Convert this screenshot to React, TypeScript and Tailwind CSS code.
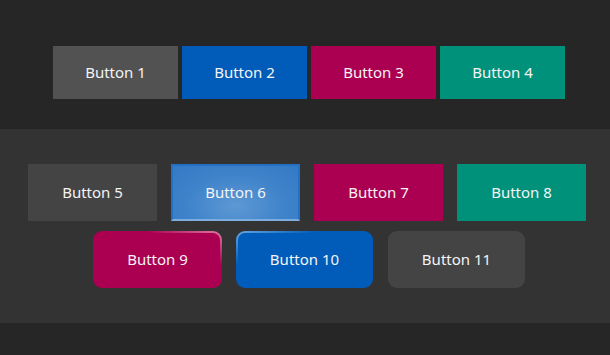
import React from "react";

const font = "font-['Segoe_UI','Noto_Sans','Open_Sans',sans-serif]";

export default function App() {
  const base = `flex items-center justify-center text-[15px] text-[#f4f4f4] ${font}`;
  return (
    <div className="w-[610px] h-[355px] bg-[#262626] overflow-hidden">
      <div className="h-[129px] pl-[53px] pt-[46px] flex gap-[4px]">
        <div className={`${base} w-[125px] h-[53px] bg-[#525252]`}>Button 1</div>
        <div className={`${base} w-[125px] h-[53px] bg-[#005cb8]`}>Button 2</div>
        <div className={`${base} w-[125px] h-[53px] bg-[#ab0051]`}>Button 3</div>
        <div className={`${base} w-[125px] h-[53px] bg-[#00917b]`}>Button 4</div>
      </div>
      <div className="h-[194px] bg-[#333333] pt-[35px] flex flex-col gap-[10px]">
        <div className="flex pl-[28px] gap-[14px]">
          <div className={`${base} w-[129px] h-[57px] bg-[#444444]`}>Button 5</div>
          <div
            className={`${base} w-[129px] h-[57px] border-2 border-[#2470c4] border-b-[#7eaee0] bg-[radial-gradient(ellipse_at_50%_75%,#5e98d4_0%,#3f83ca_55%,#3479c6_100%)]`}
          >
            Button 6
          </div>
          <div className={`${base} w-[129px] h-[57px] bg-[#ab0051]`}>Button 7</div>
          <div className={`${base} w-[129px] h-[57px] bg-[#00917b]`}>Button 8</div>
        </div>
        <div className="flex pl-[93px]">
          <div
            className={`${base} w-[129px] h-[57px] rounded-[9px] border-2 border-transparent [background:linear-gradient(#ab0051,#ab0051)_padding-box,linear-gradient(to_bottom_left,#e27aa6_0%,#ab0051_30%)_border-box]`}
          >
            Button 9
          </div>
          <div
            className={`${base} ml-[14px] w-[137px] h-[57px] rounded-[9px] border-2 border-transparent [background:linear-gradient(#005cb8,#005cb8)_padding-box,linear-gradient(to_bottom_right,#6aa6e2_0%,#005cb8_30%)_border-box]`}
          >
            Button 10
          </div>
          <div className={`${base} ml-[15px] w-[137px] h-[57px] rounded-[9px] bg-[#444444]`}>Button 11</div>
        </div>
      </div>
    </div>
  );
}
